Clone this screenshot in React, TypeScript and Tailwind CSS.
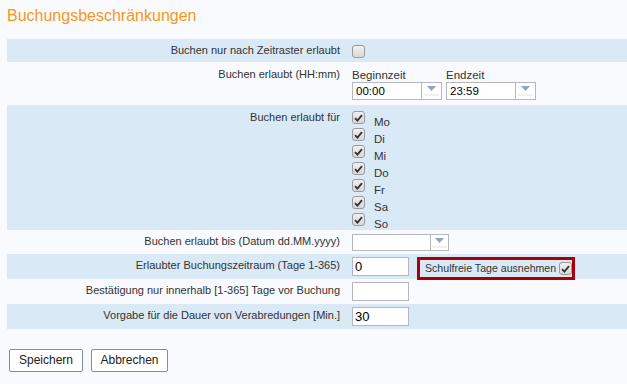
import React from 'react';

const font = { fontFamily: '"Liberation Sans", Arial, sans-serif' };

function Check({ checked }: { checked?: boolean }) {
  return (
    <span className="inline-flex w-[13px] h-[13px] shrink-0 items-center justify-center rounded-[3px] border border-[#9a9a9a] bg-gradient-to-b from-[#f0f0f0] to-[#d8d8d8]">
      {checked && (
        <svg width="9" height="8" viewBox="0 0 9 8">
          <path d="M1 4.2 L3.4 6.6 L8 1.2" fill="none" stroke="#333" strokeWidth="1.8" />
        </svg>
      )}
    </span>
  );
}

function Arrow({ w }: { w: string }) {
  return (
    <span className={`flex ${w} flex-col items-center justify-center border-l border-[#b4b7c0]`}>
      <svg width="9" height="5" viewBox="0 0 9 5">
        <path d="M0 0 H9 L4.5 5 Z" fill="#8fa2c4" />
      </svg>
      <span className="mt-[3px] h-[2px] w-[15px] bg-[#eef3e6]" />
    </span>
  );
}

function Select({ value }: { value: string }) {
  return (
    <div className="flex h-[18px] w-[90px] border border-[#b4b7c0] bg-white">
      <span className="flex-1 pl-[3px] pt-[1px] leading-[15px] text-[11.5px] text-black">{value}</span>
      <Arrow w="w-[20px]" />
    </div>
  );
}

function Row({ label, blue, h, pt, children }: { label: string; blue?: boolean; h: string; pt: string; children?: React.ReactNode }) {
  return (
    <div className={`flex ${h} ${blue ? 'bg-[#d9eaf6]' : ''}`}>
      <div className={`w-[334px] shrink-0 pr-[1px] text-right ${pt}`}>{label}</div>
      <div className="pl-[11px]">{children}</div>
    </div>
  );
}

function TextInput({ value }: { value?: string }) {
  return (
    <div className="h-[19px] w-[57px] border border-[#b4b7c0] bg-white pl-[2px] text-[13px] leading-[17px] text-black">
      {value}
    </div>
  );
}

const days = ['Mo', 'Di', 'Mi', 'Do', 'Fr', 'Sa', 'So'];

export default function App() {
  return (
    <div className="h-[384px] w-[627px] overflow-hidden bg-[#f8fafd] text-[11px] leading-[13px] text-[#333]" style={font}>
      <h1 className="pl-[7px] pt-[6px] text-[16px] leading-[20px] text-[#f7971e]">Buchungsbeschränkungen</h1>
      <div className="ml-[7px] mt-[13px]">
        <Row label="Buchen nur nach Zeitraster erlaubt" blue h="h-[23px]" pt="pt-[5px]">
          <div className="pt-[6px]"><Check /></div>
        </Row>
        <Row label="Buchen erlaubt (HH:mm)" h="h-[43px]" pt="pt-[6px]">
          <div className="flex gap-[4px] pt-[7px]">
            <div>
              <div className="h-[13px] text-[11.5px]">Beginnzeit</div>
              <Select value="00:00" />
            </div>
            <div>
              <div className="h-[13px] text-[11.5px]">Endzeit</div>
              <Select value="23:59" />
            </div>
          </div>
        </Row>
        <Row label="Buchen erlaubt für" blue h="h-[125px]" pt="pt-[6px]">
          <div className="flex flex-col pt-[6px]">
            {days.map((d) => (
              <div key={d} className="flex h-[17px] items-start gap-[9px]">
                <Check checked />
                <span className="mt-[5px] leading-[12px] text-[11.5px]">{d}</span>
              </div>
            ))}
          </div>
        </Row>
        <Row label="Buchen erlaubt bis (Datum dd.MM.yyyy)" h="h-[24px]" pt="pt-[5px]">
          <div className="pt-[4px]">
            <div className="flex h-[17px] w-[97px] border border-[#b4b7c0] bg-white">
              <span className="flex-1" />
              <Arrow w="w-[18px]" />
            </div>
          </div>
        </Row>
        <Row label="Erlaubter Buchungszeitraum (Tage 1-365)" blue h="h-[25px]" pt="pt-[5px]">
          <div className="flex items-start gap-[8px] pt-[3px]">
            <TextInput value="0" />
            <div className="flex h-[23px] w-[158px] items-center gap-[3px] whitespace-nowrap border-[3px] border-[#a8000b] pl-[5px] pr-[2px] text-[10.6px]">
              <span>Schulfreie Tage ausnehmen</span>
              <Check checked />
            </div>
          </div>
        </Row>
        <Row label="Bestätigung nur innerhalb [1-365] Tage vor Buchung" h="h-[25px]" pt="pt-[5px]">
          <div className="pt-[3px]"><TextInput /></div>
        </Row>
        <Row label="Vorgabe für die Dauer von Verabredungen [Min.]" blue h="h-[25px]" pt="pt-[5px]">
          <div className="pt-[3px]"><TextInput value="30" /></div>
        </Row>
      </div>
      <div className="flex gap-[8px] pl-[9px] pt-[20px]">
        <button className="h-[23px] w-[74px] rounded-[2px] border border-[#7591b4] bg-white text-[12px] text-[#222]">Speichern</button>
        <button className="h-[23px] w-[77px] rounded-[2px] border border-[#7591b4] bg-white text-[12px] text-[#222]">Abbrechen</button>
      </div>
    </div>
  );
}
